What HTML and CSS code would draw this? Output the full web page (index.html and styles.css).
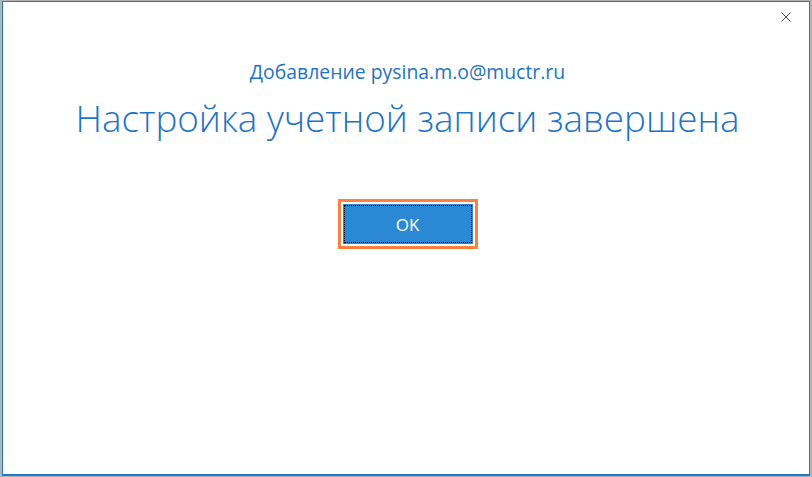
FILE: index.html
```html
<!DOCTYPE html>
<html lang="ru">
<head>
<meta charset="utf-8">
<title>Настройка учетной записи</title>
<link rel="stylesheet" href="styles.css">
</head>
<body>
<div class="window">
  <div class="titlebar">
    <button class="close" aria-label="Закрыть">
      <svg width="10" height="10" viewBox="0 0 10 10"><path d="M0.5 0.5L9.5 9.5M9.5 0.5L0.5 9.5" stroke="#444" stroke-width="1"/></svg>
    </button>
  </div>
  <div class="content">
    <div class="subtitle">Добавление pysina.m.o@muctr.ru</div>
    <h1 class="title">Настройка учетной записи завершена</h1>
    <div class="focus-ring">
      <button class="ok"><span class="ok-inner">OK</span></button>
    </div>
  </div>
</div>
</body>
</html>
```
FILE: styles.css
```css
html, body {
  margin: 0;
  padding: 0;
  width: 812px;
  height: 477px;
  background: #b4b4b4;
  overflow: hidden;
}
.window {
  box-sizing: border-box;
  margin: 1px 0 0 2px;
  width: 808px;
  height: 475px;
  background: #fff;
  border: 1px solid #1979ca;
  border-bottom-width: 2px;
  display: flex;
  flex-direction: column;
  font-family: "Open Sans", "Noto Sans", sans-serif;
}
.titlebar {
  height: 28px;
  display: flex;
  justify-content: flex-end;
}
.close {
  border: 0;
  background: transparent;
  width: 36px;
  height: 30px;
  padding: 0;
  margin-right: 5px;
  display: flex;
  align-items: center;
  justify-content: center;
}
.content {
  display: flex;
  flex-direction: column;
  align-items: center;
  padding-left: 3px;
}
.subtitle {
  margin-top: 29px;
  font-size: 19.4px;
  color: #1e74c4;
  line-height: 26px;
}
.title {
  margin: 9px 0 0 0;
  font-size: 36.8px;
  font-weight: 300;
  color: #1e74c4;
  line-height: 48px;
  letter-spacing: 0;
}
.focus-ring {
  margin-top: 57px;
  border: 3px solid #ff7f3f;
  padding: 2px;
  display: flex;
}
.ok {
  width: 130px;
  height: 40px;
  border: 0;
  padding: 1px;
  background: #2b88d4;
  display: flex;
}
.ok-inner {
  flex: 1;
  border: 1px dotted #000;
  color: #fff;
  font-family: "Open Sans", "Noto Sans", sans-serif;
  font-size: 17px;
  display: flex;
  align-items: center;
  justify-content: center;
}
```
